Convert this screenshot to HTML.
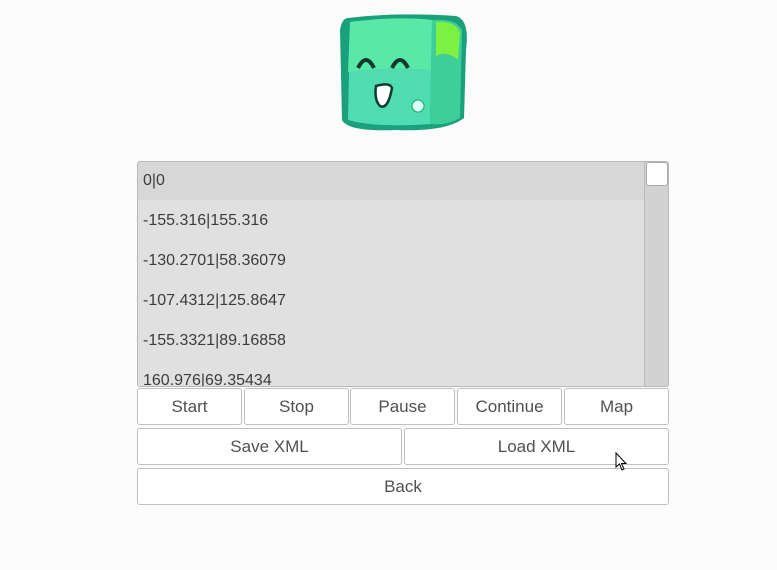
<!DOCTYPE html><html><head><style>
body{margin:0;width:777px;height:570px;background:#fbfbfb;position:relative;overflow:hidden;font-family:"Liberation Sans",sans-serif}
.p{position:absolute;left:137px;top:161px;width:530px;height:224px;border:1px solid #b8b8b8;border-radius:3px;background:#e0e0e0;overflow:hidden}
.r{position:absolute;left:5px;font-size:16px;color:#3c3c3c}
.sb{position:absolute;left:506px;top:0;width:24px;height:224px;background:#d2d2d2;border-left:1px solid #bbb}
.h{position:absolute;left:1px;top:0;width:22px;height:24px;background:#fff;border:1px solid #aaa;border-radius:3px;box-sizing:border-box}
.b{position:absolute;height:37px;background:#fff;border:1px solid #c0c0c0;border-radius:3px;box-sizing:border-box;text-align:center;line-height:36px;font-size:17px;color:#505050}
</style></head><body>
<svg style="position:absolute;left:336px;top:10px" width="136" height="124" viewBox="0 0 136 124">
<path d="M12 8 Q60 2 120 6 Q134 10 130 40 L128 108 Q110 122 60 120 Q12 122 6 110 L4 20 Q6 8 12 8Z" fill="#1aa07a"/>
<path d="M14 12 Q60 6 96 10 L94 114 Q40 118 12 110 Z" fill="#4fdcb0"/>
<path d="M14 12 Q60 6 96 10 L95 60 Q50 56 12 62Z" fill="#5ae8a8"/>
<path d="M96 10 Q120 8 126 20 L124 108 Q110 116 94 114Z" fill="#3ccf9a"/>
<path d="M100 12 Q118 10 124 22 L122 50 Q110 40 100 46Z" fill="#7ef040"/>
<path d="M22 58 Q30 42 38 58 M56 58 Q64 42 72 58" stroke="#103a30" stroke-width="4" fill="none"/>
<path d="M40 76 Q54 72 56 78 Q52 100 44 96 Q38 90 40 76Z" fill="#fff" stroke="#103a30" stroke-width="2.5"/>
<circle cx="82" cy="96" r="6" fill="#dff" stroke="#1a5" stroke-width="1"/>
</svg>
<div class="p">
<div style="position:absolute;left:0;top:0;width:506px;height:38px;background:#d7d7d7"></div>
<div class="r" style="top:10px">0|0</div>
<div class="r" style="top:50px">-155.316|155.316</div>
<div class="r" style="top:90px">-130.2701|58.36079</div>
<div class="r" style="top:130px">-107.4312|125.8647</div>
<div class="r" style="top:170px">-155.3321|89.16858</div>
<div class="r" style="top:210px">160.976|69.35434</div>
<div class="sb"><div class="h"></div></div>
</div>
<div class="b" style="left:137px;top:388px;width:105px">Start</div>
<div class="b" style="left:244px;top:388px;width:105px">Stop</div>
<div class="b" style="left:350px;top:388px;width:105px">Pause</div>
<div class="b" style="left:457px;top:388px;width:105px">Continue</div>
<div class="b" style="left:564px;top:388px;width:105px">Map</div>
<div class="b" style="left:137px;top:428px;width:265px">Save XML</div>
<div class="b" style="left:404px;top:428px;width:265px">Load XML</div>
<div class="b" style="left:137px;top:468px;width:532px">Back</div>
<svg style="position:absolute;left:615px;top:452px" width="14" height="20"><path d="M1 1 L1 15 L4.5 12 L7 18 L9 17 L6.5 11.5 L11 11.5Z" fill="#fff" stroke="#000" stroke-width="1"/></svg>
</body></html>
